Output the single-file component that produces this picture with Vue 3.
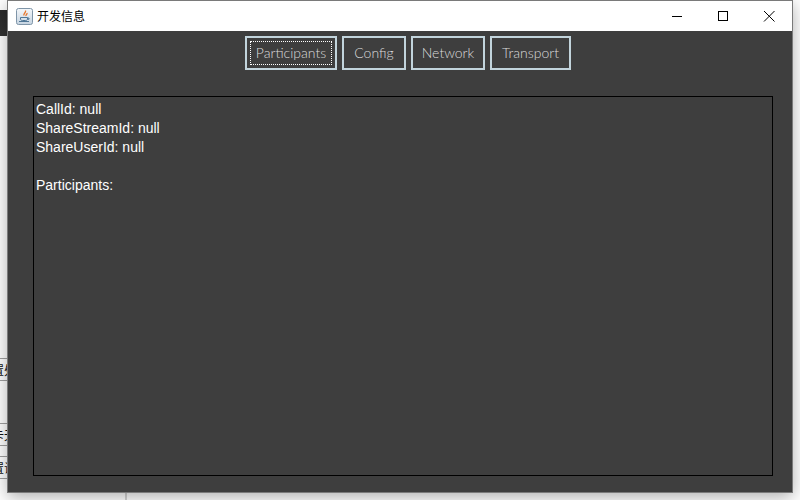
<script setup>
const tabs = ['Participants', 'Config', 'Network', 'Transport']
const lines = ['CallId: null', 'ShareStreamId: null', 'ShareUserId: null', '', 'Participants:']
const backdrop = [
  { text: '置处', top: 358, height: 23 },
  { text: '卡无', top: 423, height: 23 },
  { text: '置试', top: 456, height: 23 },
]
</script>

<template>
  <div class="desktop">
    <div class="back-bar"></div>
    <div class="back-rule"></div>
    <div
      v-for="item in backdrop"
      :key="item.top"
      class="back-item"
      :style="{ top: item.top + 'px', height: item.height + 'px' }"
    >{{ item.text }}</div>

    <section class="window">
      <header class="titlebar">
        <svg class="app-icon" width="17" height="17" viewBox="0 0 17 17">
          <defs>
            <linearGradient id="tile" x1="0" y1="0" x2="0" y2="1">
              <stop offset="0" stop-color="#f4f7fa" />
              <stop offset="1" stop-color="#c5d3e0" />
            </linearGradient>
          </defs>
          <rect x="0.5" y="0.5" width="16" height="16" rx="2" fill="url(#tile)" stroke="#7f95a8" />
          <path d="M9.5 2.500C10.500 4.500 7 5.500 8 7.500M11 5C11.500 6 9.500 7 10 8" fill="none" stroke="#e8762b" stroke-width="1.3" />
          <path d="M4.500 9.500h7v1.500c0 1-1 1.500-2 1.500h-3c-1 0-2-.5-2-1.500zM11.500 10h1.500v1.300h-1.500M3 13.500h10" fill="none" stroke="#4f7696" stroke-width="1" />
        </svg>
        <span class="title">开发信息</span>
        <div class="controls">
          <svg class="control" width="46" height="30" viewBox="0 0 46 30"><path d="M18 15.500h10" stroke="#000" fill="none" /></svg>
          <svg class="control" width="46" height="30" viewBox="0 0 46 30"><rect x="18.500" y="10.500" width="9" height="9" stroke="#000" fill="none" /></svg>
          <svg class="control" width="46" height="30" viewBox="0 0 46 30"><path d="M18 10l10.500 10.500M28.500 10L18 20.500" stroke="#000" fill="none" /></svg>
        </div>
      </header>

      <div class="body">
        <nav class="tabs">
          <button
            v-for="(tab, index) in tabs"
            :key="tab"
            class="tab"
            :class="{ focused: index === 0 }"
            type="button"
          ><span class="tab-label">{{ tab }}</span></button>
        </nav>
        <div class="panel">
          <div v-for="(line, index) in lines" :key="index" class="line">{{ line }}</div>
        </div>
      </div>
    </section>
  </div>
</template>

<style>
html, body { margin: 0; padding: 0; overflow: hidden; }
</style>

<style scoped>
.desktop {
  position: relative;
  width: 800px;
  height: 500px;
  overflow: hidden;
  background: #fff;
  font-family: "Liberation Sans", Arial, sans-serif;
}
.back-bar {
  position: absolute;
  left: 0;
  top: 10px;
  width: 8px;
  height: 26px;
  background: linear-gradient(#2a2a2a, #333);
}
.back-rule {
  position: absolute;
  left: 125px;
  top: 490px;
  width: 2px;
  height: 10px;
  background: #d4d4d4;
}
.back-item {
  position: absolute;
  left: -9px;
  width: 30px;
  box-sizing: border-box;
  border: 1px solid #a0a0a0;
  font: 12px/21px "Noto Sans CJK SC", sans-serif;
  color: #111;
  white-space: nowrap;
}
.window {
  position: absolute;
  left: 7px;
  top: 0;
  width: 786px;
  height: 493px;
  box-sizing: border-box;
  border: 1px solid #7a7a7a;
  display: flex;
  flex-direction: column;
  box-shadow: 0 4px 16px rgba(0, 0, 0, 0.32);
}
.titlebar {
  height: 30px;
  flex: none;
  display: flex;
  align-items: center;
  background: #fff;
  padding-left: 8px;
}
.app-icon { flex: none; }
.title {
  margin-left: 4px;
  font: 12px/30px "Noto Sans CJK SC", sans-serif;
  color: #000;
}
.controls {
  margin-left: auto;
  display: flex;
}
.control { display: block; }
.body {
  flex: 1;
  min-height: 0;
  background: #3e3e3e;
  padding: 5px 19px 16px 25px;
  display: flex;
  flex-direction: column;
}
.tabs {
  display: flex;
  justify-content: center;
  gap: 5px;
  height: 34px;
  padding-left: 10px;
}
.tab {
  box-sizing: border-box;
  height: 34px;
  margin: 0;
  padding: 3px;
  border: 2px solid #c2d4dc;
  background: #3e3e3e;
  color: #dcdcdc;
  font: 300 14px/1 "Lato", sans-serif;
  display: flex;
}
.tab:nth-child(1) { width: 92px; }
.tab:nth-child(2) { width: 64px; }
.tab:nth-child(3) { width: 74px; }
.tab:nth-child(4) { width: 81px; }
.tab-label {
  flex: 1;
  display: flex;
  align-items: center;
  justify-content: center;
  border: 1px solid transparent;
}
.focused .tab-label { border: 1px dotted #fff; }
.panel {
  flex: 1;
  min-height: 0;
  margin-top: 26px;
  box-sizing: border-box;
  border: 1px solid #000;
  padding: 3px 2px;
  color: #fff;
  font: 14px/19px "Liberation Sans", Arial, sans-serif;
}
.line { height: 19px; white-space: pre; }
</style>
